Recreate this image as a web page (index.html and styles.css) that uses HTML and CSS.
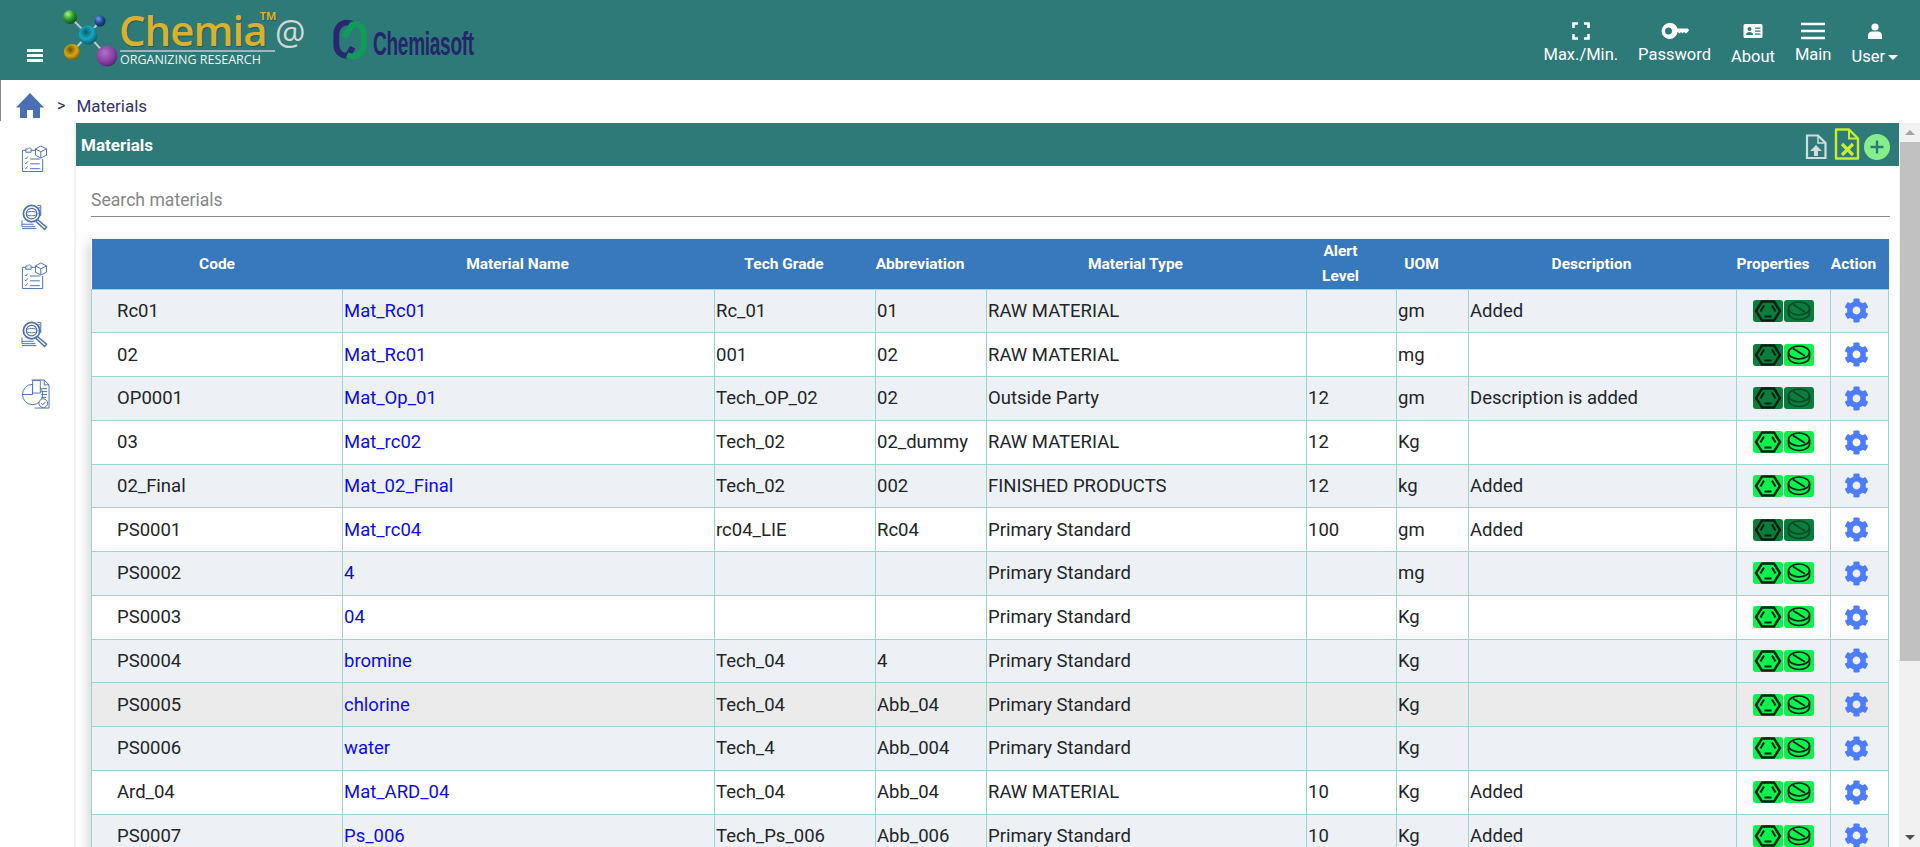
FILE: index.html
```html
<!DOCTYPE html>
<html lang="en">
<head>
    <meta charset="UTF-8">
    <title>Materials | Chemia</title>
    <link rel="stylesheet" href="styles.css">
</head>
<body>

<!-- shared icons -->
<svg class="sprite" width="0" height="0">
    <defs>
        <radialGradient id="ball-green" cx="35%" cy="30%" r="75%"><stop offset="0" stop-color="#a8f08c"/><stop offset=".5" stop-color="#2f9e2c"/><stop offset="1" stop-color="#0c4a14"/></radialGradient>
        <radialGradient id="ball-blue" cx="35%" cy="30%" r="75%"><stop offset="0" stop-color="#6f9fe0"/><stop offset=".5" stop-color="#1f4f9c"/><stop offset="1" stop-color="#0d2450"/></radialGradient>
        <radialGradient id="ball-cyan" cx="40%" cy="35%" r="70%"><stop offset="0" stop-color="#0b5a6c"/><stop offset=".5" stop-color="#14a8c0"/><stop offset="1" stop-color="#0a5566"/></radialGradient>
        <radialGradient id="ball-gold" cx="40%" cy="35%" r="70%"><stop offset="0" stop-color="#6a5200"/><stop offset=".55" stop-color="#d8a810"/><stop offset="1" stop-color="#6d5306"/></radialGradient>
        <radialGradient id="ball-purple" cx="40%" cy="35%" r="70%"><stop offset="0" stop-color="#b070c8"/><stop offset=".6" stop-color="#8a3fa6"/><stop offset="1" stop-color="#54206a"/></radialGradient>
    </defs>
    <symbol id="i-gear" viewBox="0 0 512 512"><path d="M487.4 315.7l-42.6-24.6c4.3-23.2 4.3-47 0-70.2l42.6-24.6c4.9-2.8 7.1-8.6 5.5-14-11.1-35.6-30-67.8-54.7-94.6-3.8-4.1-10-5.1-14.8-2.3L380.8 110c-17.9-15.4-38.5-27.3-60.8-35.1V25.8c0-5.6-3.9-10.5-9.4-11.7-36.7-8.2-74.3-7.8-109.2 0-5.5 1.2-9.4 6.1-9.4 11.7V75c-22.2 7.9-42.8 19.8-60.8 35.1L88.7 85.5c-4.9-2.8-11-1.9-14.8 2.3-24.7 26.7-43.6 58.9-54.7 94.6-1.7 5.4.6 11.2 5.5 14L67.3 221c-4.3 23.2-4.3 47 0 70.2l-42.6 24.6c-4.9 2.8-7.1 8.6-5.5 14 11.1 35.6 30 67.8 54.7 94.6 3.8 4.1 10 5.1 14.8 2.3l42.6-24.6c17.9 15.4 38.5 27.3 60.8 35.1v49.2c0 5.6 3.9 10.5 9.4 11.7 36.7 8.2 74.3 7.8 109.2 0 5.5-1.2 9.4-6.1 9.4-11.7v-49.2c22.2-7.9 42.8-19.8 60.8-35.1l42.6 24.6c4.9 2.8 11 1.9 14.8-2.3 24.7-26.7 43.6-58.9 54.7-94.6 1.5-5.5-.7-11.3-5.6-14.1zM256 336c-44.1 0-80-35.9-80-80s35.9-80 80-80 80 35.9 80 80-35.9 80-80 80z"/></symbol>
    <symbol id="i-ring" viewBox="0 0 30 22"><g fill="none" stroke="currentColor" stroke-width="2.400"><path d="M9 1.500h12L27 11l-6 9.500H9L3 11z"/><path d="M7.500 11.500L11 5.500M22.500 11.500L19 5.500M11.500 16.500h7" stroke-width="2"/></g></symbol>
    <symbol id="i-tablet" viewBox="0 0 30 22"><g fill="none" stroke="currentColor" stroke-width="1.700"><ellipse cx="15" cy="8.500" rx="10.500" ry="6.500"/><path d="M4.500 8.500v4.500c0 3.600 4.700 6.500 10.500 6.500S25.500 16.600 25.500 13V8.500M9 4.500l12 7.500"/></g></symbol>
    <symbol id="i-clip" viewBox="0 0 28 28"><g fill="none" stroke="currentColor" stroke-width="1"><path d="M15 5H10.500M5 5H1.500v22h21V14"/><path d="M5 7V3.500h2a2 2 0 0 1 3.500 0v3.500z"/><path d="M15 3.500l5.500-3 6 3v6.500l-6 3-5.500-3zM15 3.500l5.500 3 6-3M20.500 6.500v6.500"/><path d="M4 13l1 1 2-2.500M4 18l1 1 2-2.500M4 23l1 1 2-2.500M9.500 14h10M9.500 19h10M9.500 24h10"/></g></symbol>
    <symbol id="i-lens" viewBox="0 0 28 28"><g fill="none" stroke="currentColor"><circle cx="11" cy="10" r="8.500" stroke-width="1.800"/><circle cx="11" cy="10" r="5.500" stroke-width="1.200"/><ellipse cx="11" cy="10" rx="5.500" ry="2.200"/><path d="M17 1.500h3.500v11M18 4h2M18 7h2M18 10h2"/><path d="M1 17v6.500h14M1 21h12M1 25.500h15"/><path d="M17 16l9.500 8-2 2.500-9-8.500" stroke-width="1.500"/></g></symbol>
    <symbol id="i-pie" viewBox="0 0 30 32"><g fill="none" stroke="currentColor" stroke-width="1"><path d="M11 1h13l5 5v24H14"/><path d="M24 1v5h5M21 10h6M21 13h6M21 16h6M21 19h5"/><circle cx="12" cy="16" r="10.500"/><path d="M12 16V5.500M12 16H1.500"/><path d="M12 1.500h8v13h-8z" fill="#fff" opacity=".9"/><circle cx="23" cy="25" r="4.500" fill="#fff"/><path d="M20.800 25l1.700 1.700 2.800-3"/></g></symbol>
</svg>

<header class="topbar">
    <button class="burger" type="button"><span></span><span></span><span></span></button>

    <div class="chemia-logo">
        <svg class="molecule" width="60" height="62" viewBox="60 8 60 62">
            <path d="M70 17L88 35M100 21L88 35M72 52L88 35M107 56L88 35" stroke="#b8c6c6" stroke-width="2"/>
            <circle cx="70" cy="17" r="7" fill="url(#ball-green)"/>
            <circle cx="100" cy="21" r="5.500" fill="url(#ball-blue)"/>
            <circle cx="88" cy="35" r="9.500" fill="url(#ball-cyan)"/>
            <circle cx="72" cy="52" r="8" fill="url(#ball-gold)"/>
            <circle cx="107" cy="56" r="10.500" fill="url(#ball-purple)"/>
        </svg>
        <div class="wordmark">
            <div class="wordmark-name">Chemia<sup>TM</sup></div>
            <div class="wordmark-tag">ORGANIZING RESEARCH</div>
        </div>
        <span class="at-sign">@</span>
    </div>

    <div class="soft-logo">
        <svg width="34" height="41" viewBox="0 0 34 42">
            <path d="M20 5C10 1 3 7 3 16v10c0 8 6 13 12 11l5-8" fill="none" stroke="#27296e" stroke-width="6"/>
            <path d="M14 37c10 4 17-2 17-11V16c0-8-6-12-12-10l-8 13" fill="none" stroke="#0f9d58" stroke-width="6"/>
        </svg>
        <span>Chemiasoft</span>
    </div>

    <nav class="topnav">
        <a class="nav-item">
            <svg width="18" height="18" viewBox="0 0 18 18"><path d="M1.500 6V1.500H6M12 1.500h4.500V6M16.500 12v4.500H12M6 16.500H1.500V12" fill="none" stroke="#fff" stroke-width="2.600"/></svg>
            <span>Max./Min.</span>
        </a>
        <a class="nav-item">
            <svg width="28" height="18" viewBox="0 0 28 18"><path fill="#fff" fill-rule="evenodd" d="M9 1a8 8 0 0 1 7.500 5.500H27l1 2-3 3-2-1.500-1.500 1.500-1.500-1.500-1.500 1.500-2-1.500H16.500A8 8 0 1 1 9 1zM7.500 5.500a3.500 3.500 0 1 0 0 7 3.500 3.500 0 0 0 0-7z"/></svg>
            <span>Password</span>
        </a>
        <a class="nav-item nav-item-low">
            <svg width="20" height="16" viewBox="0 0 20 16"><path fill="#fff" fill-rule="evenodd" d="M2 1h16a1.500 1.500 0 0 1 1.500 1.500v11A1.500 1.500 0 0 1 18 15H2a1.500 1.500 0 0 1-1.500-1.500v-11A1.500 1.500 0 0 1 2 1zM6.500 4a2 2 0 1 0 0 4 2 2 0 0 0 0-4zM3 12h7c0-2-1.500-3-3.500-3S3 10 3 12zM12 4.500v1.300h5.500V4.500zM12 7.500v1.300h5.500V7.500zM12 10.500v1.300h5.500v-1.300z"/></svg>
            <span>About</span>
        </a>
        <a class="nav-item">
            <svg width="24" height="18" viewBox="0 0 24 18"><path d="M0 2h24M0 9h24M0 16h24" stroke="#fff" stroke-width="2.600"/></svg>
            <span>Main</span>
        </a>
        <a class="nav-item nav-item-low">
            <svg width="14" height="16" viewBox="0 0 14 16"><circle cx="7" cy="4" r="3.600" fill="#fff"/><path fill="#fff" d="M0 16v-3.500C0 10 2 8.500 4 8.500h6c2 0 4 1.500 4 4V16z"/></svg>
            <span>User<i class="caret"></i></span>
        </a>
    </nav>
</header>

<div class="crumbs">
    <svg width="28" height="25" viewBox="0 0 28 25"><path fill="#4a6fb5" d="M14 0L0 14.500h4V25h7v-8h6v8h7V14.500h4z"/></svg>
    <span class="crumb-sep">&gt;</span>
    <span class="crumb-name">Materials</span>
</div>

<div class="workspace">
    <aside class="sidebar">
        <svg width="27" height="28"><use href="#i-clip"/></svg>
        <svg width="27" height="27"><use href="#i-lens"/></svg>
        <svg width="27" height="28"><use href="#i-clip"/></svg>
        <svg width="27" height="27"><use href="#i-lens"/></svg>
        <svg width="29" height="31"><use href="#i-pie"/></svg>
    </aside>

    <main class="content">
        <div class="panel-title">
            <h1>Materials</h1>
            <div class="panel-tools">
                <svg width="22" height="26" viewBox="0 0 22 26"><path d="M2 1.500h11l7.500 7.500v15H2z" fill="none" stroke="#d3dcdc" stroke-width="2.200"/><path d="M13 1.500V9h7.500" fill="none" stroke="#d3dcdc" stroke-width="1.500"/><path d="M11 11l6 6h-4v5H9v-5H5z" fill="#d3dcdc"/></svg>
                <svg width="26" height="32" viewBox="0 0 26 32"><path d="M2 1.500h13l9 9v20H2z" fill="none" stroke="#c6f02c" stroke-width="2.400" stroke-linejoin="round"/><path d="M15 1.500v9h9" fill="none" stroke="#c6f02c" stroke-width="2"/><path d="M8 16l11 11M19 16L8 27" stroke="#c6f02c" stroke-width="3.200"/></svg>
                <svg width="26" height="26" viewBox="0 0 26 26"><circle cx="13" cy="13" r="13" fill="#86ef8c"/><path d="M13 6.500v13M6.500 13h13" stroke="#2d7a78" stroke-width="2.400"/></svg>
            </div>
        </div>

        <div class="search-row">
            <input class="search" type="text" placeholder="Search materials">
        </div>

        <table class="materials">
            <thead>
                <tr>
                    <th class="col-code">Code</th>
                    <th class="col-name">Material Name</th>
                    <th class="col-grade">Tech Grade</th>
                    <th class="col-abbr">Abbreviation</th>
                    <th class="col-type">Material Type</th>
                    <th class="col-alert">Alert<br>Level</th>
                    <th class="col-uom">UOM</th>
                    <th class="col-desc">Description</th>
                    <th class="col-props">Properties</th>
                    <th class="col-action">Action</th>
                </tr>
            </thead>
            <tbody>
                <tr>
                    <td class="code">Rc01</td><td><a>Mat_Rc01</a></td><td>Rc_01</td><td>01</td><td>RAW MATERIAL</td><td></td><td>gm</td><td>Added</td>
                    <td class="props"><span class="prop off"><svg><use href="#i-ring"/></svg></span><span class="prop off"><svg><use href="#i-tablet"/></svg></span></td>
                    <td class="action"><svg class="gear"><use href="#i-gear"/></svg></td>
                </tr>
                <tr>
                    <td class="code">02</td><td><a>Mat_Rc01</a></td><td>001</td><td>02</td><td>RAW MATERIAL</td><td></td><td>mg</td><td></td>
                    <td class="props"><span class="prop off"><svg><use href="#i-ring"/></svg></span><span class="prop"><svg><use href="#i-tablet"/></svg></span></td>
                    <td class="action"><svg class="gear"><use href="#i-gear"/></svg></td>
                </tr>
                <tr>
                    <td class="code">OP0001</td><td><a>Mat_Op_01</a></td><td>Tech_OP_02</td><td>02</td><td>Outside Party</td><td>12</td><td>gm</td><td>Description is added</td>
                    <td class="props"><span class="prop off"><svg><use href="#i-ring"/></svg></span><span class="prop off"><svg><use href="#i-tablet"/></svg></span></td>
                    <td class="action"><svg class="gear"><use href="#i-gear"/></svg></td>
                </tr>
                <tr>
                    <td class="code">03</td><td><a>Mat_rc02</a></td><td>Tech_02</td><td>02_dummy</td><td>RAW MATERIAL</td><td>12</td><td>Kg</td><td></td>
                    <td class="props"><span class="prop"><svg><use href="#i-ring"/></svg></span><span class="prop"><svg><use href="#i-tablet"/></svg></span></td>
                    <td class="action"><svg class="gear"><use href="#i-gear"/></svg></td>
                </tr>
                <tr>
                    <td class="code">02_Final</td><td><a>Mat_02_Final</a></td><td>Tech_02</td><td>002</td><td>FINISHED PRODUCTS</td><td>12</td><td>kg</td><td>Added</td>
                    <td class="props"><span class="prop"><svg><use href="#i-ring"/></svg></span><span class="prop"><svg><use href="#i-tablet"/></svg></span></td>
                    <td class="action"><svg class="gear"><use href="#i-gear"/></svg></td>
                </tr>
                <tr>
                    <td class="code">PS0001</td><td><a>Mat_rc04</a></td><td>rc04_LIE</td><td>Rc04</td><td>Primary Standard</td><td>100</td><td>gm</td><td>Added</td>
                    <td class="props"><span class="prop off"><svg><use href="#i-ring"/></svg></span><span class="prop off"><svg><use href="#i-tablet"/></svg></span></td>
                    <td class="action"><svg class="gear"><use href="#i-gear"/></svg></td>
                </tr>
                <tr>
                    <td class="code">PS0002</td><td><a>4</a></td><td></td><td></td><td>Primary Standard</td><td></td><td>mg</td><td></td>
                    <td class="props"><span class="prop"><svg><use href="#i-ring"/></svg></span><span class="prop"><svg><use href="#i-tablet"/></svg></span></td>
                    <td class="action"><svg class="gear"><use href="#i-gear"/></svg></td>
                </tr>
                <tr>
                    <td class="code">PS0003</td><td><a>04</a></td><td></td><td></td><td>Primary Standard</td><td></td><td>Kg</td><td></td>
                    <td class="props"><span class="prop"><svg><use href="#i-ring"/></svg></span><span class="prop"><svg><use href="#i-tablet"/></svg></span></td>
                    <td class="action"><svg class="gear"><use href="#i-gear"/></svg></td>
                </tr>
                <tr>
                    <td class="code">PS0004</td><td><a>bromine</a></td><td>Tech_04</td><td>4</td><td>Primary Standard</td><td></td><td>Kg</td><td></td>
                    <td class="props"><span class="prop"><svg><use href="#i-ring"/></svg></span><span class="prop"><svg><use href="#i-tablet"/></svg></span></td>
                    <td class="action"><svg class="gear"><use href="#i-gear"/></svg></td>
                </tr>
                <tr class="row-hover">
                    <td class="code">PS0005</td><td><a>chlorine</a></td><td>Tech_04</td><td>Abb_04</td><td>Primary Standard</td><td></td><td>Kg</td><td></td>
                    <td class="props"><span class="prop"><svg><use href="#i-ring"/></svg></span><span class="prop"><svg><use href="#i-tablet"/></svg></span></td>
                    <td class="action"><svg class="gear"><use href="#i-gear"/></svg></td>
                </tr>
                <tr>
                    <td class="code">PS0006</td><td><a>water</a></td><td>Tech_4</td><td>Abb_004</td><td>Primary Standard</td><td></td><td>Kg</td><td></td>
                    <td class="props"><span class="prop"><svg><use href="#i-ring"/></svg></span><span class="prop"><svg><use href="#i-tablet"/></svg></span></td>
                    <td class="action"><svg class="gear"><use href="#i-gear"/></svg></td>
                </tr>
                <tr>
                    <td class="code">Ard_04</td><td><a>Mat_ARD_04</a></td><td>Tech_04</td><td>Abb_04</td><td>RAW MATERIAL</td><td>10</td><td>Kg</td><td>Added</td>
                    <td class="props"><span class="prop"><svg><use href="#i-ring"/></svg></span><span class="prop"><svg><use href="#i-tablet"/></svg></span></td>
                    <td class="action"><svg class="gear"><use href="#i-gear"/></svg></td>
                </tr>
                <tr>
                    <td class="code">PS0007</td><td><a>Ps_006</a></td><td>Tech_Ps_006</td><td>Abb_006</td><td>Primary Standard</td><td>10</td><td>Kg</td><td>Added</td>
                    <td class="props"><span class="prop"><svg><use href="#i-ring"/></svg></span><span class="prop"><svg><use href="#i-tablet"/></svg></span></td>
                    <td class="action"><svg class="gear"><use href="#i-gear"/></svg></td>
                </tr>
            </tbody>
        </table>
    </main>

    <!-- drawn scrollbar, the headless browser has none -->
    <div class="scrollbar">
        <i class="arrow-up"></i>
        <div class="thumb"></div>
        <div class="track"></div>
        <i class="arrow-down"></i>
    </div>
</div>

</body>
</html>
```

FILE: styles.css
```css
* {
    box-sizing: border-box;
}

html, body {
    height: 100%;
}

body {
    margin: 0;
    font-family: Roboto, "Liberation Sans", sans-serif;
    font-size: 16px;
    color: #212529;
    background: white;
    overflow: hidden;
    display: flex;
    flex-direction: column;
}

.sprite {
    position: absolute;
}

/* top bar */
.topbar {
    height: 80px;
    flex: none;
    background: #2d7a78;
    display: flex;
    align-items: flex-start;
    color: white;
}

.burger {
    width: 16px;
    height: 13px;
    margin: 49px 0 0 27px;
    padding: 0;
    border: none;
    background: none;
    display: flex;
    flex-direction: column;
    justify-content: space-between;
}

.burger span {
    display: block;
    height: 3px;
    background: white;
}

.chemia-logo {
    display: flex;
    align-items: flex-start;
    margin: 8px 0 0 17px;
}

.wordmark {
    width: 155px;
}

.wordmark-name {
    font-family: "Open Sans", sans-serif;
    font-size: 42px;
    font-weight: 600;
    line-height: 43px;
    color: #dbb02e;
    letter-spacing: -1px;
    text-indent: -1px;
    border-bottom: 2px solid #9fb4bc;
    height: 44px;
    white-space: nowrap;
    text-shadow: 1px 1px 1px rgba(0,0,0,0.25);
}

.wordmark-name sup {
    font-size: 11px;
    line-height: 0;
    font-weight: bold;
    vertical-align: 26px;
    margin-left: -7px;
    letter-spacing: 0;
}

.wordmark-tag {
    font-family: "Open Sans", sans-serif;
    font-size: 12.500px;
    line-height: 14px;
    margin-top: 1px;
    white-space: nowrap;
    color: #eef4f4;
}

.at-sign {
    font-family: "Open Sans", sans-serif;
    font-size: 34px;
    line-height: 36px;
    margin-top: 6px;
    color: #d6d6d2;
}

.soft-logo {
    display: flex;
    align-items: flex-end;
    margin: 19px 0 0 28px;
    color: #25256b;
}

.soft-logo span {
    font-family: "Liberation Sans", sans-serif;
    font-weight: bold;
    font-size: 34px;
    line-height: 34px;
    margin-left: 6px;
    letter-spacing: -0.5px;
    transform: scaleX(0.56);
    transform-origin: left center;
}

.topnav {
    margin-left: auto;
    padding: 22px 22px 0 0;
    display: flex;
    gap: 20px;
}

.nav-item {
    display: flex;
    flex-direction: column;
    align-items: center;
    font-size: 16.500px;
    line-height: 19px;
    color: white;
}

.nav-item svg {
    height: 18px;
    margin-bottom: 5px;
}

.nav-item-low svg {
    margin-bottom: 7px;
}

.caret {
    display: inline-block;
    margin-left: 3px;
    vertical-align: 2px;
    border-left: 5px solid transparent;
    border-right: 5px solid transparent;
    border-top: 5px solid white;
}

/* breadcrumb */
.crumbs {
    height: 43px;
    flex: none;
    display: flex;
    align-items: center;
    padding: 8px 0 0 15px;
    border-left: 1px solid #888;
}

.crumb-sep {
    margin: 0 11px 0 13px;
    font-size: 16px;
    color: #2b2b6b;
}

.crumb-name {
    font-size: 17px;
    color: #33336e;
}

.workspace {
    flex: 1;
    min-height: 0;
    display: flex;
}

.sidebar {
    width: 76px;
    flex: none;
    border-right: 2px solid #f1f1f1;
    margin-top: -2px;
    padding: 24px 0 0 21px;
    display: flex;
    flex-direction: column;
    align-items: flex-start;
    gap: 31px;
    color: #4a6fb5;
    position: relative;
    background: white;
}

.content {
    flex: 1;
    min-width: 0;
    overflow: hidden;
}

.panel-title {
    height: 43px;
    background: #2d7a78;
    color: white;
    display: flex;
    align-items: center;
    justify-content: space-between;
    padding: 0 9px 0 5px;
}

.panel-title h1 {
    margin: 0;
    font-size: 17px;
    font-weight: bold;
}

.panel-tools {
    display: flex;
    align-items: center;
    gap: 7px;
    margin-top: 4px;
}

.panel-tools svg:nth-child(2) {
    margin-top: -5px;
}

.panel-tools svg:nth-child(3) {
    margin-left: -3px;
}

.search-row {
    padding: 16px 9px 0 15px;
}

.search {
    display: block;
    width: 100%;
    height: 35px;
    border: none;
    border-bottom: 1px solid #8a8a8a;
    padding: 2px 0 0;
    font-family: Roboto, sans-serif;
    font-size: 17.600px;
    outline: none;
}

.search::placeholder {
    color: #868686;
}

/* table */
.materials {
    width: 1797px;
    margin: 22px 0 0 15px;
    border-collapse: collapse;
    table-layout: fixed;
    box-shadow: -4px 4px 10px rgba(0,0,0,0.15);
}

.materials th {
    height: 50px;
    padding: 0 22px 0 0;
    background: #3878bd;
    color: white;
    font-size: 15.500px;
    line-height: 24.500px;
    font-weight: bold;
    text-align: center;
}

.materials td {
    height: 43.750px;
    padding: 0 1px;
    border: 1px solid #97d6d1;
    white-space: nowrap;
    font-size: 18.500px;
}

.materials tbody tr:nth-child(odd) {
    background: #edf0f5;
}

.materials tbody tr.row-hover {
    background: #ebebeb;
}

.materials a {
    color: #0b0bee;
}

.materials td.code {
    padding-left: 25px;
}

.col-code { width: 251px; }
.col-name { width: 372px; }
.col-grade { width: 161px; }
.col-abbr { width: 111px; }
.col-type { width: 320px; }
.col-alert { width: 90px; }
.col-uom { width: 72px; }
.col-desc { width: 268px; }
.col-props { width: 94px; }
.col-action { width: 58px; }

.materials th.col-code { padding-right: 0; }
.materials th.col-action { padding-right: 12px; }

.materials td.props {
    text-align: center;
    font-size: 0;
    padding: 0;
}

.prop {
    display: inline-block;
    width: 30px;
    height: 22px;
    margin: 0 0.5px;
    border-radius: 3px;
    background: #0bf24e;
    color: #0c1f12;
    vertical-align: middle;
}

.prop.off {
    background: #0a7d3c;
}

.prop.off + .prop.off {
    color: #0c4a28;
}

.prop svg {
    display: block;
    width: 30px;
    height: 22px;
}

.materials td.action {
    text-align: center;
    padding: 0 6px 0 0;
}

.gear {
    display: block;
    width: 25px;
    height: 25px;
    margin: 0 auto;
    fill: #4d7cfe;
}

/* scrollbar */
.scrollbar {
    width: 21px;
    flex: none;
    background: #f1f1f1;
    display: flex;
    flex-direction: column;
    align-items: flex-end;
}

.arrow-up,
.arrow-down {
    display: block;
    width: 0;
    margin: 7px 5px;
    border-left: 5px solid transparent;
    border-right: 5px solid transparent;
}

.arrow-up {
    border-bottom: 5px solid #a3a3a3;
}

.arrow-down {
    border-top: 5px solid #505050;
}

.thumb {
    width: 20px;
    height: 519px;
    background: #c1c1c1;
}

.track {
    flex: 1;
}
```
